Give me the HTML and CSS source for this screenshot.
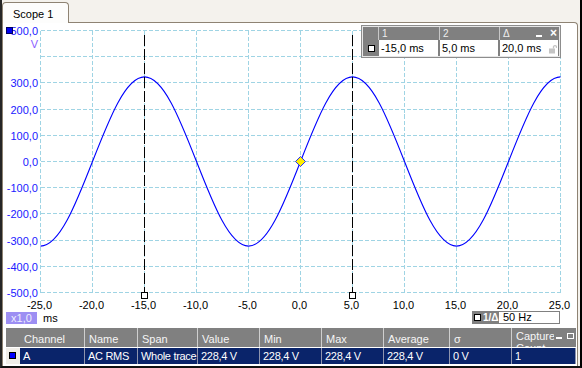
FILE: index.html
```html
<html><head>
<meta http-equiv="content-type" content="text/html; charset=UTF-8">
<link rel="stylesheet" href="styles.css">
</head>
<body>
<div class="window">
  <div class="tabs"><div class="tab">Scope 1</div></div>
  <div class="panel">
    <div class="plot">
      <svg class="chart" width="574" height="287" viewBox="3 23 574 287">
        <path class="grid" d="M40.5 30.5V292.5M92.5 30.5V292.5M144.5 30.5V292.5M196.5 30.5V292.5M248.5 30.5V292.5M300.5 30.5V292.5M352.5 30.5V292.5M404.5 30.5V292.5M456.5 30.5V292.5M508.5 30.5V292.5M560.5 30.5V292.5M40.5 30.5H560.5M40.5 56.5H560.5M40.5 82.5H560.5M40.5 109.5H560.5M40.5 135.5H560.5M40.5 161.5H560.5M40.5 187.5H560.5M40.5 213.5H560.5M40.5 240.5H560.5M40.5 266.5H560.5M40.5 292.5H560.5"/>

        <!-- os Y -->
        <text class="ylab" x="38" y="35">500,0</text>
        <rect class="chan" x="6.5" y="27.5" width="6" height="6"/>
        <text class="yunit" x="38" y="48">V</text>
        <text class="ylab" x="38" y="87">300,0</text>
        <text class="ylab" x="38" y="114">200,0</text>
        <text class="ylab" x="38" y="140">100,0</text>
        <text class="ylab" x="38" y="166">0,0</text>
        <text class="ylab" x="38" y="192">-100,0</text>
        <text class="ylab" x="38" y="218">-200,0</text>
        <text class="ylab" x="38" y="245">-300,0</text>
        <text class="ylab" x="38" y="271">-400,0</text>
        <text class="ylab" x="38" y="297">-500,0</text>

        <!-- os X -->
        <text class="xlab" x="39.5" y="309">-25,0</text>
        <text class="xlab" x="91.5" y="309">-20,0</text>
        <text class="xlab" x="143.5" y="309">-15,0</text>
        <text class="xlab" x="195.5" y="309">-10,0</text>
        <text class="xlab" x="247.5" y="309">-5,0</text>
        <text class="xlab" x="299.5" y="309">0,0</text>
        <text class="xlab" x="351.5" y="309">5,0</text>
        <text class="xlab" x="403.5" y="309">10,0</text>
        <text class="xlab" x="455.5" y="309">15,0</text>
        <text class="xlab" x="507.5" y="309">20,0</text>
        <text class="xlab" x="559.5" y="309">25,0</text>

        <path class="trace" d="M40.5,246.1 C59.32,246.1 75.54,204.84 92.5,161.5 S125.68,76.9 144.5,76.9 S179.54,118.16 196.5,161.5 S229.68,246.1 248.5,246.1 S283.54,204.84 300.5,161.5 S333.68,76.9 352.5,76.9 S387.54,118.16 404.5,161.5 S437.68,246.1 456.5,246.1 S491.54,204.84 508.5,161.5 S541.68,76.9 560.5,76.9"/>

        <!-- kursory -->
        <path class="cursor" d="M144.5 35V292M352.5 35V292"/>
        <rect class="handle" x="141.5" y="292.5" width="6" height="6"/>
        <rect class="handle" x="349.5" y="292.5" width="6" height="6"/>

        <polygon class="trigger" points="300.5,156.5 305.5,161.5 300.5,166.5 295.5,161.5"/>
      </svg>

      <div class="readout">
        <div class="ro-h ro-first"></div>
        <div class="ro-h">1</div>
        <div class="ro-h">2</div>
        <div class="ro-h">Δ<span class="ro-ctrl"><span class="ro-min"></span><span class="ro-x">×</span></span></div>
        <div class="ro-c ro-first"><span class="check"></span></div>
        <div class="ro-c">-15,0 ms</div>
        <div class="ro-c">5,0 ms</div>
        <div class="ro-c">20,0 ms
          <svg class="lock" width="8" height="10" viewBox="0 0 8 10">
            <path d="M4.5 4.5V2.5a1.8 1.8 0 0 1 3 0V4" fill="none" stroke="#c4c4c4" stroke-width="1.3"/>
            <rect x="0" y="4.5" width="6" height="5" fill="#c4c4c4"/>
          </svg>
        </div>
      </div>
    </div>

    <div class="axis-foot">
      <span class="zoom">x1,0</span><span class="unit">ms</span>
      <div class="freq">
        <span class="freq-key"><span class="check"></span>1/Δ</span>
        <span class="freq-val">50 Hz</span>
      </div>
    </div>

    <div class="meas">
      <div class="meas-row meas-head">
        <div class="mc mc-icon"></div>
        <div class="mc">Channel</div>
        <div class="mc">Name</div>
        <div class="mc">Span</div>
        <div class="mc">Value</div>
        <div class="mc">Min</div>
        <div class="mc">Max</div>
        <div class="mc">Average</div>
        <div class="mc">σ</div>
        <div class="mc mc-last">Capture Count<span class="mh-ctrl"><span class="ro-min"></span><span class="mh-box"></span></span></div>
      </div>
      <div class="meas-row meas-data">
        <div class="mc mc-icon"><span class="chan-box"></span></div>
        <div class="mc">A</div>
        <div class="mc">AC RMS</div>
        <div class="mc">Whole trace</div>
        <div class="mc">228,4 V</div>
        <div class="mc">228,4 V</div>
        <div class="mc">228,4 V</div>
        <div class="mc">228,4 V</div>
        <div class="mc">0 V</div>
        <div class="mc">1</div>
      </div>
    </div>
  </div>
</div>
</body></html>
```

FILE: styles.css
```css
body {
    margin: 0;
    font-family: "Liberation Sans", Arial, sans-serif;
    font-size: 11px;
}

* {
    box-sizing: border-box;
}

.window {
    width: 582px;
    height: 368px;
    border-left: 2px solid #262626;
    border-right: 2px solid #000;
    border-bottom: 2px solid #111;
    background: #f4f2ed;
    display: flex;
    flex-direction: column;
}

.tabs {
    height: 22px;
    display: flex;
}
.tab {
    position: relative;
    z-index: 1;
    margin-top: 2px;
    width: 67px;
    height: 21px;
    border: 1px solid #8e8373;
    border-bottom: none;
    border-radius: 4px 4px 0 0;
    background: #fdfdfc;
    padding: 5px 0 0 10px;
    line-height: 13px;
    color: #000;
}

.panel {
    flex: 1;
    margin-right: 2px;
    background: #fff;
    border: 1px solid #8e8373;
    border-bottom: none;
    border-radius: 0 4px 0 0;
    display: flex;
    flex-direction: column;
}

.plot {
    position: relative;
    height: 287px;
}
.chart {
    display: block;
}
.grid {
    fill: none;
    stroke: #9fd4e4;
    stroke-width: 1;
    stroke-dasharray: 4 2;
    shape-rendering: crispEdges;
}
.trace {
    fill: none;
    stroke: #0000ff;
    stroke-width: 1.1;
}
.cursor {
    fill: none;
    stroke: #000;
    stroke-width: 1;
    stroke-dasharray: 11 3;
    shape-rendering: crispEdges;
}
.handle {
    fill: #fff;
    stroke: #000;
    shape-rendering: crispEdges;
}
.trigger {
    fill: #ffee00;
    stroke: #2030ff;
    stroke-width: 1;
}
.chan {
    fill: #0000ee;
    stroke: #000060;
    shape-rendering: crispEdges;
}
.ylab, .yunit, .xlab {
    font-family: "Liberation Sans", Arial, sans-serif;
    font-size: 11px;
}
.ylab {
    fill: #2020ff;
    text-anchor: end;
}
.yunit {
    fill: #8a5cff;
    text-anchor: end;
}
.xlab {
    fill: #000;
    text-anchor: middle;
}

/* tabelka kursorow */
.readout {
    position: absolute;
    left: 358px;
    top: 2px;
    width: 200px;
    height: 33px;
    border: 1px solid #8d8d8d;
    padding: 1px;
    background: #808080;
    box-shadow: inset 0 0 0 1px #e6e6e6;
    display: grid;
    grid-template-columns: 14px 59px 58px 58px;
    grid-template-rows: 13px 16px;
    column-gap: 2px;
}
.ro-h {
    position: relative;
    color: #eeeeee;
    font-size: 10px;
    line-height: 13px;
    padding-left: 3px;
    box-shadow: -1px 0 0 #c8c8c8;
}
.ro-h.ro-first {
    box-shadow: none;
}
.ro-ctrl {
    position: absolute;
    right: 1px;
    top: 0;
    display: flex;
    align-items: center;
    height: 13px;
}
.ro-min {
    display: inline-block;
    width: 6px;
    height: 2px;
    background: #fff;
    margin-top: 5px;
    margin-right: 8px;
}
.ro-x {
    color: #fff;
    font-weight: bold;
    font-size: 12px;
    line-height: 13px;
}
.ro-c {
    position: relative;
    background: #fff;
    line-height: 16px;
    padding-left: 2px;
    color: #000;
}
.ro-c.ro-first {
    background: #808080;
}
.check {
    display: block;
    width: 7px;
    height: 7px;
    border: 1px solid #000;
    background: #fff;
}
.ro-c .check {
    margin: 5px 0 0 3px;
}
.lock {
    position: absolute;
    right: 1px;
    top: 4px;
}

/* pod osia X */
.axis-foot {
    height: 18px;
    display: flex;
    align-items: flex-start;
}
.zoom {
    margin: 2px 0 0 3px;
    width: 31px;
    height: 12px;
    line-height: 12px;
    background: #9d8ff3;
    color: #eeeeff;
    text-align: center;
}
.unit {
    margin: 2px 0 0 6px;
    line-height: 12px;
}
.freq {
    margin: 1px 17px 0 auto;
    width: 88px;
    height: 13px;
    border: 1px solid #808080;
    display: flex;
}
.freq-key {
    width: 26px;
    background: #808080;
    color: #fff;
    font-weight: bold;
    font-size: 10px;
    line-height: 11px;
    display: flex;
    align-items: center;
    gap: 2px;
    padding-left: 1px;
}
.freq-val {
    padding-left: 4px;
    line-height: 11px;
}

/* tabela pomiarow */
.meas {
    margin-left: 3px;
    width: 570px;
}
.meas-row {
    display: grid;
    grid-template-columns: 14px 65px 53px 60px 62px 62px 62px 66px 62px 64px;
}
.meas-head {
    height: 19px;
    background: #808080;
    color: #f6f6f6;
}
.meas-head .mc {
    padding: 5px 0 0 4px;
    line-height: 13px;
    border-right: 1px solid #cfcfcf;
    overflow: hidden;
    white-space: nowrap;
}
.meas-head .mc-icon {
    border-right: none;
}
.meas-head .mc-last {
    position: relative;
    border-right: none;
    white-space: normal;
    padding: 2px 20px 0 4px;
    line-height: 12px;
}
.mh-ctrl {
    position: absolute;
    right: 2px;
    top: 5px;
    display: flex;
    background: #808080;
    padding-left: 2px;
}
.mh-ctrl .ro-min {
    margin-right: 5px;
    margin-top: 4px;
}
.mh-box {
    display: inline-block;
    width: 7px;
    height: 6px;
    border: 1px solid #fff;
}
.meas-data {
    margin-top: 1px;
    height: 16px;
    background: #0a246a;
    color: #fff;
    letter-spacing: -0.3px;
}
.meas-data .mc {
    line-height: 16px;
    padding-left: 3px;
    border-right: 1px solid #8e94ad;
    white-space: nowrap;
    overflow: hidden;
}
.meas-data .mc-icon {
    background: #f0eee9;
    border-right: none;
}
.chan-box {
    display: block;
    margin: 4px 0 0 0;
    width: 7px;
    height: 7px;
    background: #0000ff;
    border: 1px solid #000;
}
```
